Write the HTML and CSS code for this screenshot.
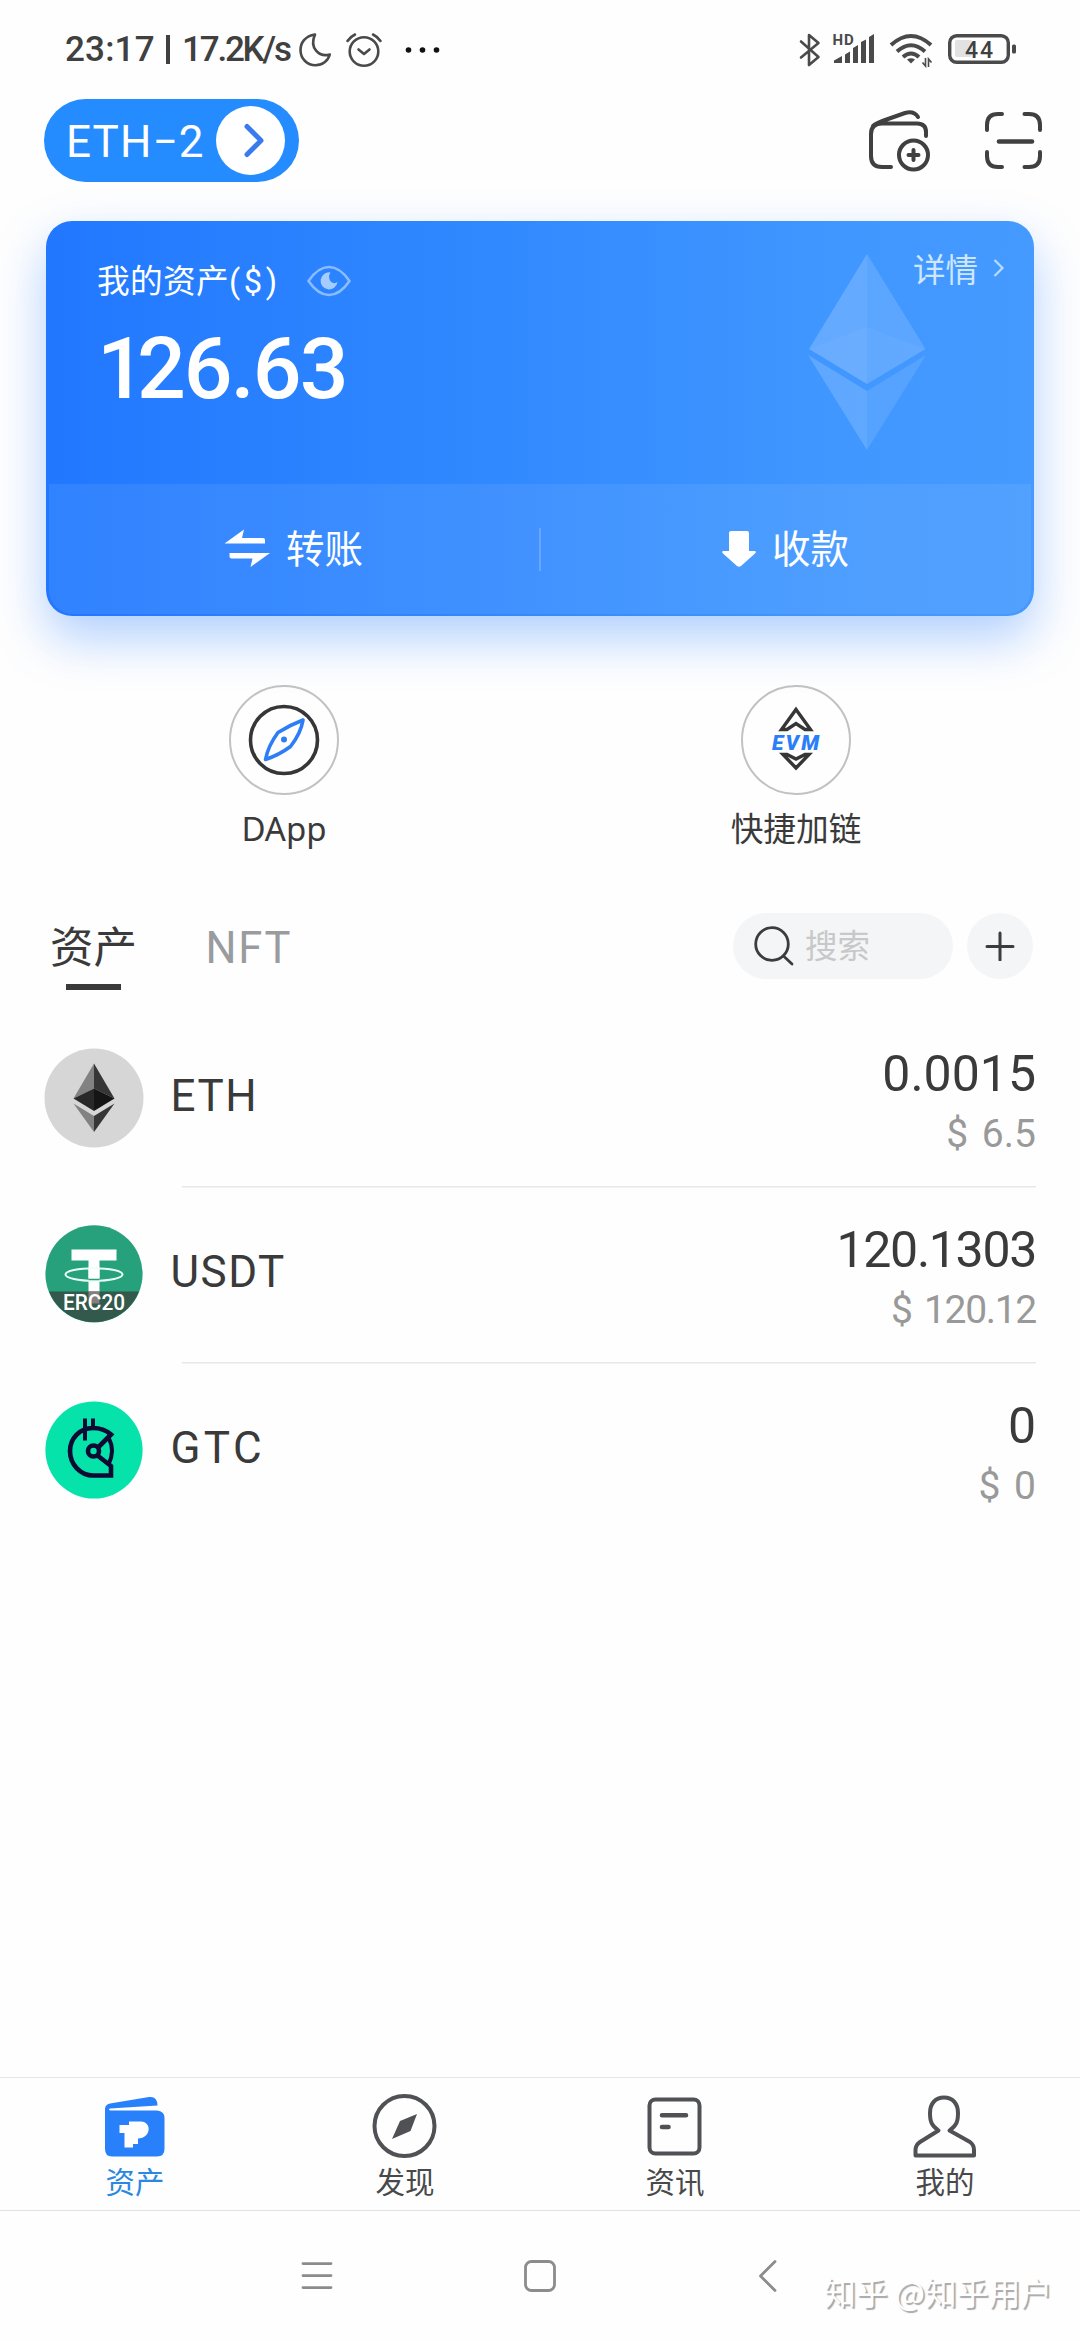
FILE: index.html
```html
<!DOCTYPE html>
<html lang="zh-CN">
<head>
<meta charset="utf-8">
<title>钱包</title>
<link rel="stylesheet" href="styles.css">
</head>
<body>
<div class="screen">
  <div class="status">
    <span class="clock">23:17</span>
    <span class="bar"></span>
    <span class="speed">17.2K/s</span>
    <svg class="moon" width="36" height="38" viewBox="298 31 36 38" fill="none" stroke="#4a4a4a" stroke-width="2.6" stroke-linejoin="round"><path d="M315 34.500C305 36 300.500 43 300.500 50C300.500 59 307.500 65.300 315.500 65.300C322.500 65.300 328 61 329.800 54.500C319 57.500 309 48 315 34.500Z"/></svg>
    <svg class="alarm" width="40" height="38" viewBox="344 31 40 38" fill="none" stroke="#4a4a4a" stroke-width="2.600" stroke-linecap="round" stroke-linejoin="round"><circle cx="364" cy="51.500" r="14.300"/><path d="M358.500 49.500L364 54L369.500 49.500M347.500 41Q350 37 355 34.500M380.500 41Q378 37 373 34.500"/></svg>
    <svg class="dots" width="36" height="10" viewBox="404 44 36 10"><g fill="#111"><circle cx="408.500" cy="49" r="2.800"/><circle cx="422.500" cy="49" r="2.800"/><circle cx="436.500" cy="49" r="2.800"/></g></svg>
    <div class="status-right">
      <svg width="30" height="40" viewBox="794 30 30 40" fill="none" stroke="#4a4a4a" stroke-width="2.600" stroke-linejoin="round" stroke-linecap="round"><path d="M801 41.500L818.500 57L809 65V35L818.500 43L801 57.500"/></svg>
      <svg width="44" height="40" viewBox="832 30 44 40"><g fill="#4a4a4a"><path d="M834 63V60.500L842 56V63ZM845 63V54.500L850 51.500V63ZM853 63V48L858 45V63ZM861 63V42L866 39.500V63ZM869 63V37L874 34V63Z"/><text class="hd" x="832.500" y="44.500">HD</text></g></svg>
      <svg width="52" height="40" viewBox="884 30 52 40" fill="none" stroke="#4a4a4a" stroke-width="4"><path d="M891 45Q911 27 931 45M897 51.500Q911 39 925 51.500M903 57Q911 50 919 57"/><path d="M907 59.500Q911 57 915 59.500L911 63.500Z" fill="#4a4a4a" stroke="none"/><path d="M925.500 58V66L922.500 62.500M928.500 67V59L931.500 62.500" stroke-width="1.600"/></svg>
      <svg width="76" height="40" viewBox="944 30 76 40"><rect x="955" y="40" width="17" height="17" rx="2" fill="#e2e2e2"/><rect x="949.700" y="35.700" width="58.600" height="26.600" rx="7" fill="none" stroke="#4a4a4a" stroke-width="3.400"/><rect x="1012" y="44.500" width="4" height="9" rx="1.500" fill="#4a4a4a"/><text class="batt" x="965" y="57.500" textLength="28">44</text></svg>
    </div>
  </div>

  <div class="header">
    <div class="wallet-pill">
      <span>ETH−2</span>
      <div class="pill-go"><svg width="69" height="69" viewBox="216 106 69 69" fill="none" stroke="#397bee" stroke-width="5" stroke-linecap="round" stroke-linejoin="round"><path d="M247 126.500L261 140.500L247 154.500"/></svg></div>
    </div>
    <div class="header-tools">
      <svg width="66" height="66" viewBox="867 107 66 66" fill="none" stroke="#404040" stroke-width="4" stroke-linecap="round"><path d="M926 135V131Q926 122.500 917 122.500H882Q871 122.500 871 133V155Q871 166 882 166H891M873 125Q876 122 888 118L905 112Q914 109.500 918 116"/><circle cx="913.500" cy="154" r="14.500"/><path d="M908.500 154H918.500M913.500 149V159"/></svg>
      <svg width="62" height="66" viewBox="983 107 62 66" fill="none" stroke="#404040" stroke-width="4" stroke-linecap="round"><path d="M987 129V124Q987 113 998 113H1002M1024.500 113H1029Q1040 113 1040 124V129M1040 151V155Q1040 166 1029 166H1024.500M1002 166H998Q987 166 987 155V151"/><path d="M999 140.500H1032" stroke-width="4.600"/></svg>
    </div>
  </div>

  <div class="card">
    <svg class="card-mark" width="118" height="198" viewBox="807.500 253 118 198"><g fill="#fff"><path fill-opacity=".19" d="M866.500 254L808.500 349L866.500 384Z"/><path fill-opacity=".14" d="M866.500 254L925 349L866.500 384Z"/><path fill-opacity=".04" d="M866.500 327L808.500 349L866.500 384L925 349Z"/><path fill-opacity=".17" d="M807.500 355L866.500 391V450Z"/><path fill-opacity=".11" d="M925.500 355L866.500 391V450Z"/></g></svg>
    <div class="card-main">
      <div class="card-sum">
        <div class="card-label"><span class="label-text">我的资产<span class="unit">($)</span></span>
          <svg width="44" height="32" viewBox="306 265 44 32" fill="none"><path d="M307.500 281Q317 267 328 267Q339 267 348.500 281Q339 295 328 295Q317 295 307.500 281Z" stroke="#8bbcff" stroke-width="2.600" stroke-linejoin="round"/><path d="M329.500 272.500A8.500 8.500 0 1 0 336.500 282Q333 284.500 329.700 281.500Q326.500 277 329.500 272.500Z" fill="#a5cbff"/></svg>
        </div>
        <div class="card-total"><span class="one">1</span>26.63</div>
      </div>
      <div class="card-detail"><span>详情</span><svg width="12" height="20" viewBox="992 258 12 20" fill="none" stroke="#b8dbff" stroke-width="2.200"><path d="M993.500 260L1001.500 268L993.500 276"/></svg></div>
    </div>
    <div class="card-actions">
      <div class="action send"><svg width="47" height="40" viewBox="224 529 47 40" fill="#fff"><path d="M224.500 543.500L244 529.500L242 538H263Q265 538 265 540V543.500ZM270 553L250.500 567L252.500 558.500H231.500Q229.500 558.500 229.500 556.500V553Z"/></svg><span>转账</span></div>
      <div class="split"></div>
      <div class="action receive"><svg width="36" height="38" viewBox="721 529 36 38" fill="#fff"><path d="M731 530H747Q749 530 749 532V550H754.500Q757 550.500 755 552.500L741 565Q739 566.500 737 565L723 552.500Q721 550.500 723.500 550H729V532Q729 530 731 530Z"/></svg><span>收款</span></div>
    </div>
  </div>

  <div class="shortcuts">
    <div class="shortcut">
      <div class="ring"><svg width="80" height="80" viewBox="244 700 80 80" fill="none"><circle cx="284" cy="740" r="33.500" stroke="#363636" stroke-width="3.600"/><path d="M303 720Q301 733 290.500 746.500Q279 755 265.500 759.500Q268 746 278 732.500Q290 725 303 720Z" stroke="#2d7df6" stroke-width="3.600" stroke-linejoin="round"/><circle cx="284" cy="739.500" r="3" fill="#2d7df6"/></svg></div>
      <span>DApp</span>
    </div>
    <div class="shortcut">
      <div class="ring"><svg width="80" height="80" viewBox="756 700 80 80" fill="none"><path d="M796 709.500L810.500 729.500H805L796 723.500L787 729.500H781.500ZM783 754.500H787L796 759L805 754.500H809L796 768Z" stroke="#363636" stroke-width="3.400"/><text class="evm" x="772" y="749.500" textLength="47">EVM</text></svg></div>
      <span class="cjk">快捷加链</span>
    </div>
  </div>

  <div class="tabs">
    <div class="tab active"><span>资产</span></div>
    <div class="tab"><span>NFT</span></div>
    <div class="search"><svg width="42" height="42" viewBox="753 925 42 42" fill="none" stroke="#3a3c3e" stroke-width="2.800" stroke-linecap="round"><circle cx="772" cy="944" r="16.300"/><path d="M783.500 956L792 964"/></svg><span>搜索</span></div>
    <div class="add"><svg width="30" height="30" viewBox="985 931 30 30" stroke="#3a3c3e" stroke-width="3" stroke-linecap="round"><path d="M987 946.500H1013M1000 933V960"/></svg></div>
  </div>

  <div class="assets">
    <div class="asset">
      <svg class="coin" width="100" height="100" viewBox="43.500 1047.500 100 100"><circle cx="93.500" cy="1097.500" r="49.500" fill="#d6d6d6"/><path fill="#828282" d="M93.500 1063L73 1098L93.500 1088Z"/><path fill="#363636" d="M93.500 1063L114 1098L93.500 1088Z"/><path fill="#292929" d="M93.500 1088L73 1098L93.500 1110.500Z"/><path fill="#151515" d="M93.500 1088L114 1098L93.500 1110.500Z"/><path fill="#828282" d="M73 1103L93.500 1115.500V1131.500Z"/><path fill="#363636" d="M114 1103L93.500 1115.500V1131.500Z"/></svg>
      <div class="asset-body"><span class="name">ETH</span><div class="values"><span class="amount">0.0015</span><span class="fiat">$ 6.5</span></div></div>
    </div>
    <div class="asset">
      <svg class="coin" width="100" height="100" viewBox="43.500 1223.500 100 100"><defs><clipPath id="disc"><circle cx="93.500" cy="1273.300" r="48.300"/></clipPath></defs><circle cx="93.500" cy="1273.300" r="48.600" fill="#27a17c"/><path fill="#fff" d="M71 1249H116V1260H99V1292H88V1260H71Z"/><ellipse cx="93.500" cy="1274" rx="28.500" ry="6.300" fill="none" stroke="#e8fff6" stroke-width="2"/><path d="M88 1279H99" stroke="#27a17c" stroke-width="1.500"/><path d="M88 1273H99" stroke="#fff" stroke-width="9"/><rect x="43" y="1291" width="101" height="32" fill="#33594c" clip-path="url(#disc)"/><path fill="#857e7d" d="M88 1291H99V1303H88Z"/><text class="erc" x="62.500" y="1309" textLength="62" lengthAdjust="spacingAndGlyphs">ERC20</text></svg>
      <div class="asset-body"><span class="name">USDT</span><div class="values"><span class="amount tight">120.1303</span><span class="fiat tight">$ 120.12</span></div></div>
    </div>
    <div class="asset">
      <svg class="coin" width="100" height="100" viewBox="43.500 1399.500 100 100"><circle cx="93.500" cy="1449.500" r="48.600" fill="#05e2aa"/><g fill="none" stroke="#0d0a33" stroke-width="4.600"><path d="M97 1447.500L110.500 1434Q103 1427.500 92.500 1427.500C79 1427.500 69.500 1438 69.500 1450.500C69.500 1464 80 1475 93 1475H110.500V1465.500L97 1455"/><circle cx="93" cy="1450.500" r="5.500"/><path d="M108 1437Q115 1450 108 1464" stroke-width="4"/><path d="M84.500 1418V1440M92.500 1418V1428" stroke-width="4"/></g></svg>
      <div class="asset-body"><span class="name wide">GTC</span><div class="values"><span class="amount">0</span><span class="fiat">$ 0</span></div></div>
    </div>
  </div>

  <div class="tabbar">
    <div class="tabbar-item on">
      <svg width="70" height="70" viewBox="100 2092 70 70"><path fill="#2880fa" d="M105 2109Q105 2104.500 110 2103.500L149 2097Q157.500 2096 157.500 2105.500L110 2108.500Q107.500 2110 111 2110.500H157Q164.500 2111 164.500 2118V2149Q164.500 2156.500 157 2156.500H112Q105 2156.500 105 2149Z"/><path fill="#fff" d="M119.500 2125H129V2121.500H141C152 2122 151.500 2138 138 2138.500V2144H133V2147.500H124.500V2133H119.500Z"/></svg>
      <span>资产</span>
    </div>
    <div class="tabbar-item">
      <svg width="70" height="70" viewBox="370 2092 70 70"><circle cx="404.500" cy="2126" r="30" fill="none" stroke="#505154" stroke-width="4"/><path fill="#505154" d="M417 2114L410.500 2131L392 2139L400 2121Z"/></svg>
      <span>发现</span>
    </div>
    <div class="tabbar-item">
      <svg width="70" height="70" viewBox="640 2092 70 70" fill="none" stroke="#505154" stroke-width="4" stroke-linecap="round"><rect x="649.500" y="2099.500" width="50" height="54" rx="6"/><path d="M662 2115.300H686M662 2127H668.500" stroke-width="4.600"/></svg>
      <span>资讯</span>
    </div>
    <div class="tabbar-item">
      <svg width="70" height="70" viewBox="910 2092 70 70" fill="none" stroke="#505154" stroke-width="4" stroke-linecap="round" stroke-linejoin="round"><path d="M938.500 2130.500C931 2125 930 2121 930 2113C930 2104 935 2097.500 944 2097.500C953 2097.500 958 2104 958 2113C958 2121 957 2125 949.500 2130.500L970 2142Q974 2145 974 2150V2155.500H915.500V2150Q915.500 2145 920 2142Z"/></svg>
      <span>我的</span>
    </div>
  </div>

  <div class="sysnav">
    <svg width="36" height="36" viewBox="299 2257 36 36" stroke="#8c8c8c" stroke-width="2.800" stroke-linecap="round"><path d="M303 2262.600H331M303 2274.600H331M303 2286.600H331"/></svg>
    <svg width="36" height="36" viewBox="522 2257 36 36" fill="none" stroke="#8c8c8c" stroke-width="2.800"><rect x="525.500" y="2260.500" width="29" height="29" rx="6"/></svg>
    <svg width="36" height="36" viewBox="749 2257 36 36" fill="none" stroke="#8c8c8c" stroke-width="2.800" stroke-linecap="round" stroke-linejoin="round"><path d="M775 2260.500L760.500 2275L775 2289.500"/></svg>
    <span class="credit">知乎 @知乎用户</span>
  </div>
</div>
</body>
</html>
```

FILE: styles.css
```css
* { box-sizing: border-box; }
body {
  margin: 0;
  background: #fefefe;
  color: #3a3a3a;
  font-family: Roboto, "Noto Sans CJK SC", sans-serif;
}
svg { display: block; flex: none; }
span { white-space: nowrap; }

.screen {
  width: 1080px;
  height: 2340px;
  display: flex;
  flex-direction: column;
  overflow: hidden;
}

/* status bar */
.status {
  height: 99px;
  padding: 0 60px 0 65px;
  display: flex;
  align-items: center;
  font-weight: 500;
  font-size: 35px;
  color: #404040;
}
.clock { width: 101px; letter-spacing: .2px; }
.bar { width: 3.5px; height: 29px; background: #404040; }
.speed { width: 116px; margin-left: 12.5px; letter-spacing: -2.2px; }
.alarm { margin-left: 10px; }
.dots { margin-left: 20px; }
.status-right { margin-left: auto; display: flex; gap: 8px; }
.hd { font: 700 15px Roboto, sans-serif; letter-spacing: 1px; }
.batt { font: 500 23px Roboto, sans-serif; fill: #404040; }

/* wallet switcher */
.header {
  height: 83px;
  padding: 0 35px 0 44px;
  display: flex;
  align-items: center;
  justify-content: space-between;
}
.wallet-pill {
  width: 255px;
  height: 83px;
  padding: 2px 14px 0 22px;
  border-radius: 42px;
  background: #258cff;
  display: flex;
  align-items: center;
  justify-content: space-between;
  color: #fff;
  font-size: 44px;
  letter-spacing: 1.1px;
}
.pill-go { width: 69px; height: 69px; margin-top: -2px; border-radius: 50%; background: #fff; }
.header-tools { display: flex; gap: 50px; }

/* balance card */
.card {
  position: relative;
  margin: 39px 46px 0;
  height: 395px;
  padding: 0 3px 2px;
  border-radius: 26px;
  background: linear-gradient(90deg, #2178ff 0%, #328aff 48%, #4097ff 80%, #459aff 100%);
  box-shadow: 0 22px 50px rgba(40, 125, 255, .36);
  color: #fff;
  display: flex;
  flex-direction: column;
}
.card-mark { position: absolute; left: 761.5px; top: 32px; }
.card-main {
  height: 263px;
  padding: 31px 26px 0 48px;
  display: flex;
  justify-content: space-between;
  align-items: flex-start;
}
.card-label {
  height: 58px;
  display: flex;
  align-items: center;
  gap: 26px;
  font-size: 32.700px;
}
.label-text { margin-top: -6px; letter-spacing: .3px; }
.unit { letter-spacing: 3.6px; }
.card-total {
  margin-top: 17px;
  line-height: 84px;
  font-size: 86px;
  font-weight: 500;
  letter-spacing: -1.9px;
}
.one { letter-spacing: -9px; }
.card-detail {
  height: 31px;
  display: flex;
  align-items: center;
  gap: 15px;
  font-size: 32.500px;
  color: #cfe6ff;
}
.card-actions {
  flex: 1;
  display: flex;
  align-items: center;
  background: rgba(255, 255, 255, .075);
  border-radius: 0 0 24px 24px;
  font-size: 38.500px;
  line-height: 50px;
}
.action { display: flex; align-items: center; gap: 15px; }
.action span { padding-top: 2px; }
.send { width: 490px; padding-left: 175px; }
.receive { flex: 1; padding-left: 180px; }
.split { width: 2px; height: 43px; background: rgba(255, 255, 255, .2); }

/* shortcuts */
.shortcuts {
  height: 240px;
  padding: 69px 28px 0;
  display: flex;
}
.shortcut {
  flex: 1;
  display: flex;
  flex-direction: column;
  align-items: center;
  gap: 12px;
  line-height: 44px;
  font-size: 33px;
  font-family: "Noto Sans", "Noto Sans CJK SC", sans-serif;
}
.shortcut .cjk { font-size: 32.700px; }
.ring {
  width: 110px;
  height: 110px;
  border: 2.500px solid #c0c2c4;
  border-radius: 50%;
  background: #fefefe;
  display: flex;
  align-items: center;
  justify-content: center;
}
.evm { font: italic 900 21px Roboto, sans-serif; fill: #2a7ff8; }

/* asset tabs */
.tabs {
  height: 153.5px;
  padding: 57px 47px 0 49.5px;
  display: flex;
  align-items: flex-start;
  font-size: 43.500px;
}
.tab {
  height: 77px;
  padding-top: 3px;
  line-height: 66px;
  color: #999b9f;
}
.tab + .tab { margin-left: 68px; letter-spacing: 1.8px; }
.active { color: #3a3a3a; width: 88px; text-align: center; }
.active::after {
  content: "";
  display: block;
  width: 55px;
  height: 6px;
  margin: 2px auto 0;
  background: #3a3a3a;
}
.search {
  width: 220px;
  height: 66px;
  margin-left: auto;
  padding-left: 20px;
  border-radius: 33px;
  background: #f4f5f7;
  display: flex;
  align-items: center;
  gap: 10px;
  font-size: 32.500px;
  color: #c8c8c8;
}
.search span { padding-bottom: 5px; }
.add {
  width: 66px;
  height: 66px;
  margin-left: 14px;
  border-radius: 50%;
  background: #f4f5f7;
  display: flex;
  align-items: center;
  justify-content: center;
}

/* asset rows */
.asset { height: 176px; padding: 0 44px 0 43.500px; display: flex; align-items: center; }
.asset-body {
  flex: 1;
  height: 176px;
  margin-left: 27px;
  padding-top: 14px;
  display: flex;
  justify-content: space-between;
}
.name { font-size: 44px; line-height: 145px; letter-spacing: 1.5px; }
.wide { letter-spacing: 3.4px; }
.asset + .asset .asset-body {
  background: linear-gradient(#e8e8e8, #e8e8e8) 11px 0 / 100% 1.500px no-repeat;
}
.values { display: flex; flex-direction: column; align-items: flex-end; }
.amount { margin-top: 22px; font-size: 50px; line-height: 56px; }
.fiat { margin-top: 7px; font-size: 39px; line-height: 50px; word-spacing: 4px; color: #999; }
.tight { letter-spacing: -1.3px; }

/* bottom tabs */
.tabbar {
  height: 134px;
  margin-top: auto;
  border-top: 1.500px solid #e6e6e6;
  border-bottom: 1.500px solid #e2e2e2;
  display: flex;
}
.tabbar-item {
  flex: 1;
  padding-top: 14px;
  display: flex;
  flex-direction: column;
  align-items: center;
  font-size: 29.500px;
  line-height: 42px;
  color: #48494b;
}
.on { color: #2b88e0; }

/* system navigation */
.sysnav {
  height: 129px;
  padding: 0 28px 0 299px;
  display: flex;
  align-items: center;
}
.sysnav svg + svg { margin-left: 187px; }
.sysnav svg:nth-child(3) { margin-left: 191px; }
.credit {
  margin: 31px 0 0 auto;
  font-size: 31.800px;
  font-family: "Noto Sans CJK SC", sans-serif;
  color: #fefefe;
  text-shadow: 2px 1.5px 1px #a8a8a8;
}
.erc { font: 500 22.500px Roboto, sans-serif; fill: #fff; }
```
